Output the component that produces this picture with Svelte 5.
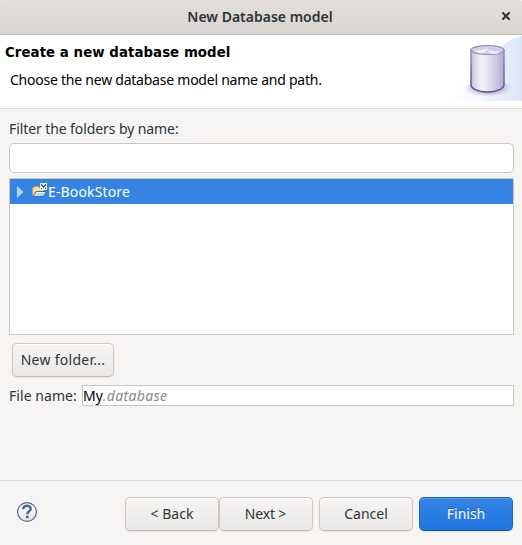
<script>
  let filter = $state('');
</script>

<div class="window">
  <header class="titlebar">
    <span class="t-title">New Database model</span>
    <svg class="close" width="8" height="8" viewBox="0 0 8 8"><path d="M1 1L7 7M7 1L1 7" stroke="#2e3436" stroke-width="2.1" stroke-linecap="square" /></svg>
  </header>

  <section class="banner">
    <div class="copy">
      <h1><span>Create a new database model</span></h1>
      <p><span class="t-sub">Choose the new database model name and path.</span></p>
    </div>
    <svg class="art" width="75" height="66" viewBox="0 0 75 66">
      <defs>
        <linearGradient id="sky" x1="0" y1="0" x2="1" y2="0">
          <stop offset="0" stop-color="#fff" /><stop offset=".45" stop-color="#f3f7fe" /><stop offset="1" stop-color="#dce5f7" />
        </linearGradient>
        <linearGradient id="body" x1="0" y1="0" x2="1" y2="0">
          <stop offset="0" stop-color="#c3bedb" /><stop offset=".15" stop-color="#dedcea" /><stop offset=".33" stop-color="#f5f5f9" /><stop offset=".6" stop-color="#dddbe9" /><stop offset="1" stop-color="#b1a9cf" />
        </linearGradient>
        <linearGradient id="edge" x1="0" y1="0" x2="0" y2="1">
          <stop offset="0" stop-color="#9a8fc0" /><stop offset="1" stop-color="#5f4c94" />
        </linearGradient>
        <radialGradient id="shade">
          <stop offset=".5" stop-color="#a59ac2" stop-opacity=".75" /><stop offset="1" stop-color="#c9c2dd" stop-opacity="0" />
        </radialGradient>
      </defs>
      <path d="M4 66C20 58 28 42 40 29C49 14 60 4 75 1V66Z" fill="url(#sky)" />
      <ellipse cx="41" cy="53" rx="25" ry="9" fill="url(#shade)" />
      <path d="M24 15V50C24 53 30 57 40.500 57S57 53 57 50V15Z" fill="url(#body)" stroke="url(#edge)" stroke-width="1.500" />
      <ellipse cx="40.500" cy="15" rx="16.500" ry="4.500" fill="#d2cce5" stroke="#9589bb" stroke-width="1.200" />
      <path d="M27 16L41 14L37 18L33 18.500Z" fill="#fff" opacity=".7" />
      <path d="M39 14.500L54 17C51 19 46 19 43 18.500Z" fill="#eeebf6" />
    </svg>
  </section>

  <main>
    <label for="filter"><span class="t-filter">Filter the folders by name:</span></label>
    <input id="filter" bind:value={filter} />
    <div class="tree">
      <div class="row">
        <svg class="arrow" width="7" height="12" viewBox="0 0 7 12"><path d="M0 0L6.500 6L0 12Z" fill="#b8d5f5" /></svg>
        <svg class="folder" width="16" height="16" viewBox="0 0 16 16">
          <path d="M1.500 12.500V4.500H3L4 3.500H7L8 4.500H12.500V12.500Z" fill="#fbe3a6" stroke="#c9975a" />
          <path d="M1.500 13.500L5 8.500H15.500L12.500 13.500Z" fill="#b9d6f3" stroke="#476da9" />
          <path d="M5.500 9.500H14" stroke="#f5fbff" />
          <path d="M9 0H16V7H9Z" fill="#e4f0f6" />
          <path d="M10 1H11V2H12V3H13V2H14V1H15V3H14V4H11V3H10ZM10 5H11V6H10ZM14 5H15V6H14ZM12 4H13V5H12Z" fill="#2d6486" />
        </svg>
        <span class="t-tree">E-BookStore</span>
      </div>
    </div>
    <button class="new"><span class="t-new">New folder...</span></button>
    <div class="file">
      <span class="t-file">File name:</span>
      <div class="field"><span class="t-my">My</span><em>.database</em></div>
    </div>
  </main>

  <footer>
    <svg class="help" width="22" height="22" viewBox="0 0 22 22">
      <defs><linearGradient id="hg" x1="0" y1="0" x2="0" y2="1"><stop offset="0" stop-color="#fff" /><stop offset="1" stop-color="#e4e5e8" /></linearGradient></defs>
      <circle cx="11" cy="11" r="9.400" fill="url(#hg)" stroke="#53668f" stroke-width="1.200" />
      <path d="M7.200 8.200C7.400 3.700 14.700 3.900 14.700 7.700C14.700 10.300 11.300 10.300 11.300 13.300" fill="none" stroke="#53668f" stroke-width="2.500" />
      <rect x="10" y="14.800" width="2.700" height="2.500" rx=".6" fill="#53668f" />
    </svg>
    <div class="pair">
      <button><span class="t-back">&lt; Back</span></button>
      <button><span class="t-next">Next &gt;</span></button>
    </div>
    <button><span class="t-cancel">Cancel</span></button>
    <button class="primary"><span class="t-finish">Finish</span></button>
  </footer>
</div>

<style>
  :global(body) { margin: 0; background: #f6f5f4; }
  .window {
    width: 522px; height: 545px; box-sizing: border-box; overflow: hidden;
    display: flex; flex-direction: column;
    background: #f6f5f4; color: #2e3436;
    font: 14px/20px "Noto Sans", sans-serif;
  }
  span, em { white-space: pre; }
  .titlebar {
    height: 35px; box-sizing: border-box; flex: none; position: relative;
    display: flex; align-items: center; justify-content: center;
    background: linear-gradient(#e1dedb, #dad6d2);
    border-bottom: 1px solid #bfb8b1; border-radius: 2px 2px 0 0;
    font-weight: 600; padding-right: 2px;
  }
  .close { position: absolute; right: 12px; top: 12px; }
  .banner {
    height: 74px; box-sizing: border-box; flex: none; display: flex; justify-content: space-between;
    background: #fff; border-bottom: 1px solid #dcdcdc; color: #000;
  }
  .copy { padding: 8px 0 0 5px; }
  h1 { margin: 0; font: bold 13.33px/20px "DejaVu Sans", sans-serif; letter-spacing: .06px; }
  p { margin: 7px 0 0 5px; }
  .t-sub { letter-spacing: -.235px; }
  .t-filter { letter-spacing: -.09px; }
  .art { display: block; }
  main { flex: 1; display: flex; flex-direction: column; padding: 10px 8px 0 9px; }
  label { display: block; height: 20px; }
  input {
    height: 30px; box-sizing: border-box; width: 100%; margin: 4px 0 5px; padding: 0 8px;
    border: 1px solid #cdc7c2; border-radius: 5px; background: #fff; outline: none; font: inherit;
  }
  .tree { height: 157px; box-sizing: border-box; border: 1px solid #cdc7c2; background: #fff; }
  .row { height: 25px; display: flex; align-items: center; background: #3584e4; color: #fff; }
  .arrow { margin: 0 8px 0 7px; }
  .folder { margin: -1px 0 0 -1px; width: 16px; }
  .t-tree { margin-left: 1px; letter-spacing: .15px; }
  button {
    box-sizing: border-box; width: 94px; height: 34px; padding: 0;
    display: flex; align-items: center; justify-content: center;
    color: #2e3436; font: inherit; border: 1px solid #cdc7c2; border-bottom-color: #bfb8b1; border-radius: 5px;
    background: linear-gradient(#f6f5f4, #e9e8e6);
    box-shadow: inset 0 1px #fff, 0 1px 2px rgba(0, 0, 0, .07);
  }
  .new { width: 102px; margin: 8px 0 0 3px; letter-spacing: .28px; }
  .t-next { letter-spacing: -.15px; margin-right: 1px; }
  .file { display: flex; align-items: center; justify-content: space-between; margin-top: 8px; height: 21px; }
  .t-file { letter-spacing: .05px; }
  .field {
    width: 432px; height: 21px; box-sizing: border-box; border: 1px solid #cdc7c2; background: #fff;
    display: flex; align-items: center; color: #000;
  }
  em { color: #888a85; letter-spacing: .35px; }
  footer {
    height: 65px; box-sizing: border-box; flex: none; display: flex; align-items: flex-start;
    border-top: 1px solid #dcdcdc; padding: 16px 9px 0 16px; gap: 6px;
  }
  .help { margin: 4px auto 0 0; }
  .pair { display: flex; }
  .primary {
    color: #fff; border-color: #1b6acb; border-bottom-color: #15539e;
    background: linear-gradient(#3584e4, #1f76e1);
    box-shadow: inset 0 1px #5899e9, 0 1px 2px rgba(0, 0, 0, .07);
    text-shadow: 0 -1px rgba(0, 0, 0, .3);
  }
</style>
